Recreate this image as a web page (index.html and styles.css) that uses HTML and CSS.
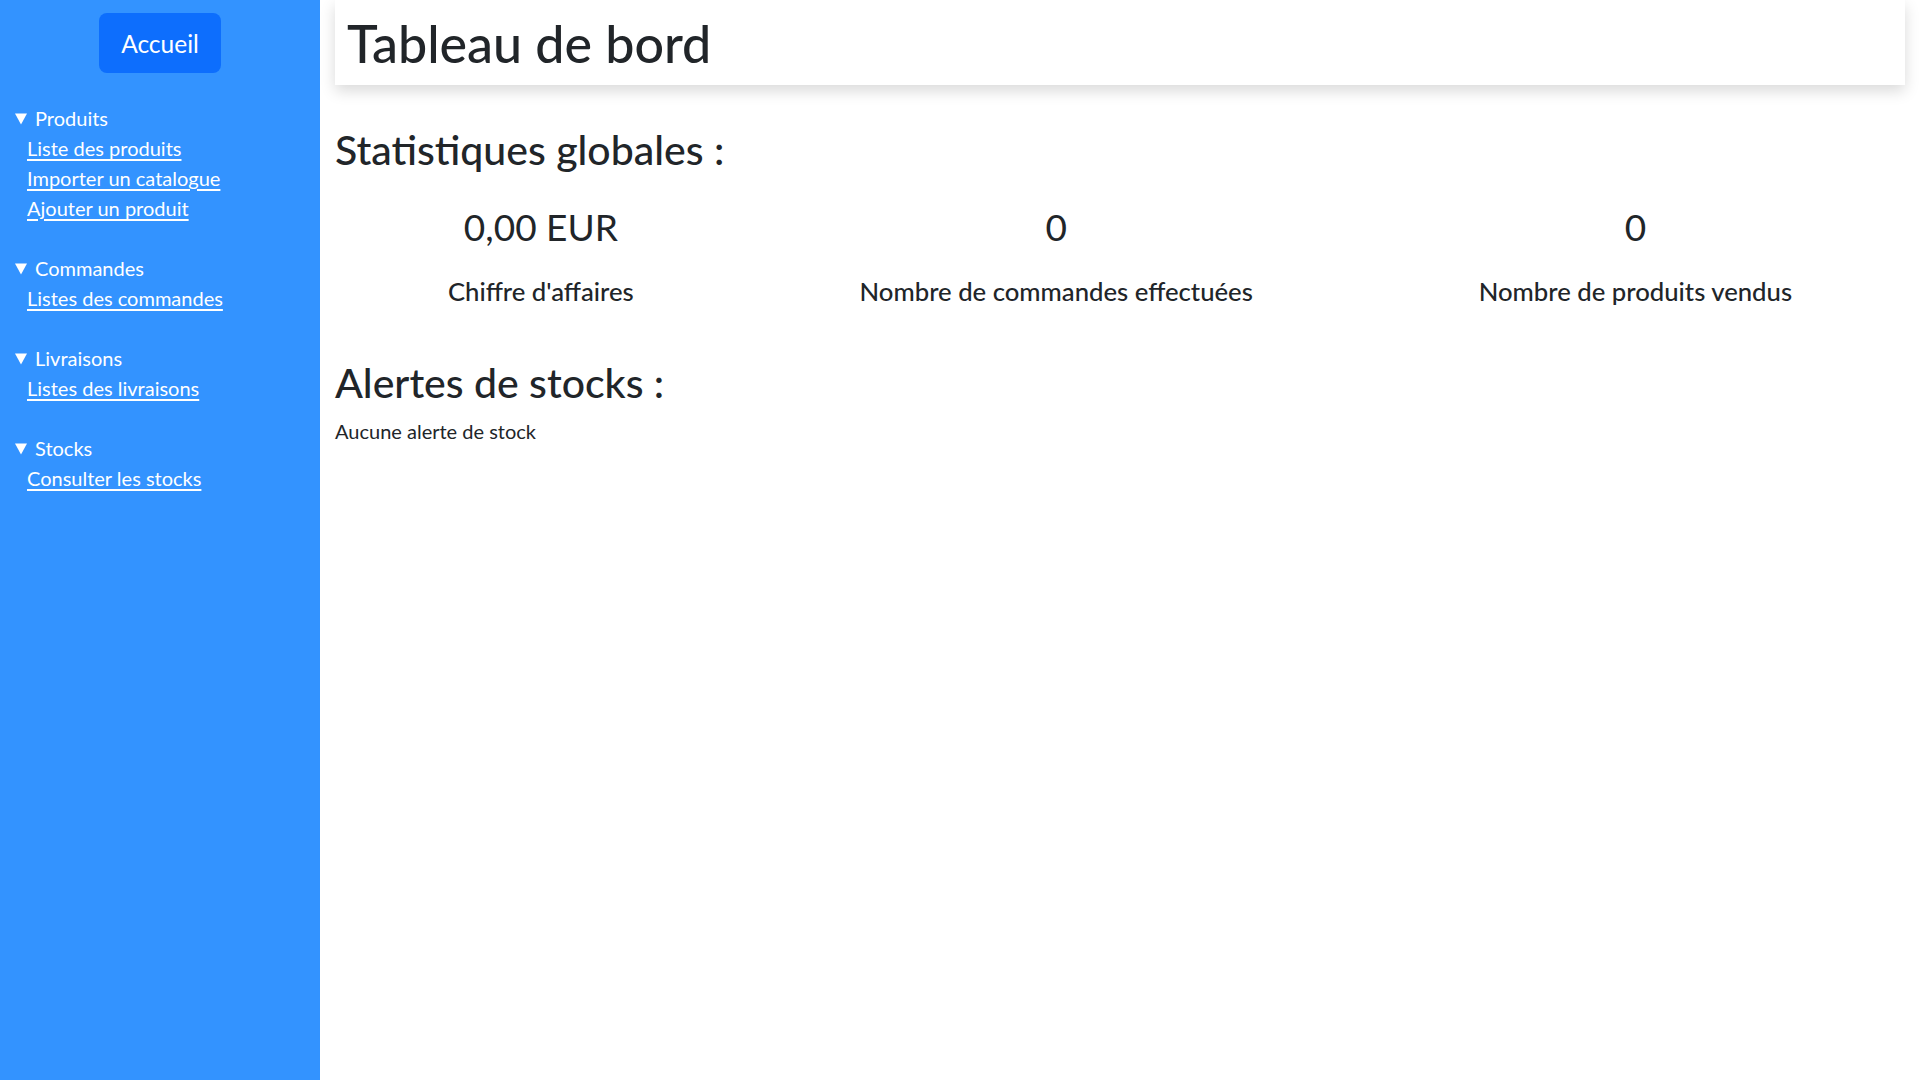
FILE: index.html
```html
<!DOCTYPE html>
<html lang="fr">
<head>
<meta charset="utf-8">
<title>Tableau de bord</title>
<link rel="stylesheet" href="styles.css">
</head>
<body>
<aside class="sidebar">
  <div class="home-wrap"><a class="btn-home" href="#">Accueil</a></div>
  <nav class="menu">
    <details open class="group">
      <summary><svg class="tri" viewBox="0 0 12 12" width="12" height="12"><path d="M0 0.5H12L6 11.5Z" fill="#fff"/></svg>Produits</summary>
      <a class="link" href="#">Liste des produits</a>
      <a class="link" href="#">Importer un catalogue</a>
      <a class="link" href="#">Ajouter un produit</a>
    </details>
    <details open class="group">
      <summary><svg class="tri" viewBox="0 0 12 12" width="12" height="12"><path d="M0 0.5H12L6 11.5Z" fill="#fff"/></svg>Commandes</summary>
      <a class="link" href="#">Listes des commandes</a>
    </details>
    <details open class="group">
      <summary><svg class="tri" viewBox="0 0 12 12" width="12" height="12"><path d="M0 0.5H12L6 11.5Z" fill="#fff"/></svg>Livraisons</summary>
      <a class="link" href="#">Listes des livraisons</a>
    </details>
    <details open class="group">
      <summary><svg class="tri" viewBox="0 0 12 12" width="12" height="12"><path d="M0 0.5H12L6 11.5Z" fill="#fff"/></svg>Stocks</summary>
      <a class="link" href="#">Consulter les stocks</a>
    </details>
  </nav>
</aside>
<main class="content">
  <header class="title-bar"><h1 class="page-title">Tableau de bord</h1></header>
  <h2 class="section-title stats-title">Statistiques globales :</h2>
  <div class="stats">
    <div class="stat"><div class="stat-value">0,00 EUR</div><div class="stat-label">Chiffre d'affaires</div></div>
    <div class="stat"><div class="stat-value">0</div><div class="stat-label">Nombre de commandes effectuées</div></div>
    <div class="stat"><div class="stat-value">0</div><div class="stat-label">Nombre de produits vendus</div></div>
  </div>
  <h2 class="section-title alerts-title">Alertes de stocks :</h2>
  <p class="empty">Aucune alerte de stock</p>
</main>
</body>
</html>
```
FILE: styles.css
```css
html, body { margin: 0; padding: 0; }
body {
  display: flex;
  min-height: 100vh;
  font-family: "Lato", "Noto Sans", sans-serif;
  color: #212529;
  background: #fff;
}
.sidebar {
  width: 320px;
  flex: none;
  background: #3393ff;
  color: #fff;
  padding: 13px 15px 0;
  box-sizing: border-box;
}
.home-wrap { text-align: center; }
.btn-home {
  display: inline-block;
  background: #0d6efd;
  color: #fff;
  text-decoration: none;
  font-size: 24.5px;
  line-height: 36px;
  padding: 13px 22px 11px;
  border-radius: 8px;
}
.menu { margin-top: 30px; }
.group { margin-bottom: 30px; }
.group summary {
  list-style: none;
  font-size: 20px;
  line-height: 30px;
  cursor: pointer;
}
.group summary::-webkit-details-marker { display: none; }
.tri { margin-right: 8px; vertical-align: 1px; }
.link {
  display: block;
  margin-left: 12px;
  color: #fff;
  font-size: 20px;
  line-height: 30px;
  text-decoration: underline;
  text-underline-offset: 3px;
}
.content {
  flex: 1;
  padding: 0 15px;
  min-width: 0;
}
.title-bar {
  background: #fff;
  box-shadow: 0 6px 14px rgba(0,0,0,0.15);
  height: 85px;
}
.page-title {
  margin: 0;
  padding: 1px 0 0 12px;
  font-size: 52px;
  line-height: 84px;
  font-weight: 500;
}
.section-title {
  margin: 0;
  font-size: 41px;
  line-height: 48px;
  font-weight: 500;
}
.stats-title { margin-top: 41px; }
.stats {
  display: flex;
  justify-content: space-around;
  margin-top: 29px;
}
.stat { text-align: center; }
.stat-value {
  font-size: 37px;
  line-height: 48px;
  font-weight: 400;
}
.stat-label {
  margin-top: 25px;
  font-size: 25.7px;
  line-height: 30px;
  font-weight: 500;
}
.alerts-title { margin-top: 53px; }
.empty {
  margin: 9px 0 0;
  font-size: 20px;
  line-height: 30px;
}
```
